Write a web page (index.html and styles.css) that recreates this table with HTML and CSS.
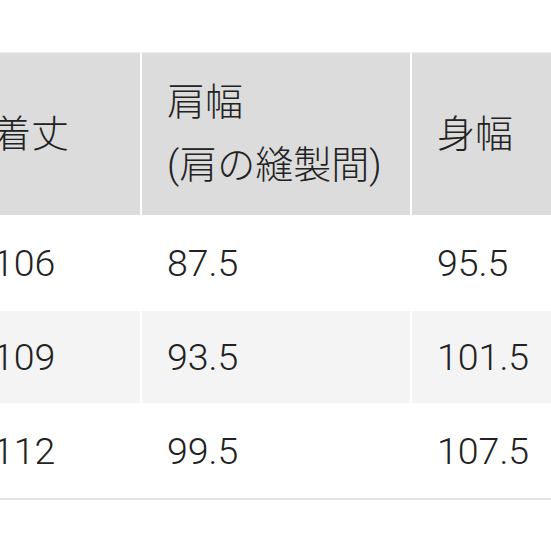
FILE: index.html
```html
<!DOCTYPE html>
<html lang="ja">
<head>
<meta charset="utf-8">
<link rel="stylesheet" href="styles.css">
</head>
<body>
<div class="frame">
<table class="size-table">
  <colgroup>
    <col class="c1"><col class="c2"><col class="c3">
  </colgroup>
  <thead>
    <tr class="head">
      <th>着丈</th>
      <th>肩幅<br>(肩の縫製間)</th>
      <th>身幅</th>
    </tr>
  </thead>
  <tbody>
    <tr class="r1"><td>106</td><td>87.5</td><td>95.5</td></tr>
    <tr class="r2 alt"><td>109</td><td>93.5</td><td>101.5</td></tr>
    <tr class="r3"><td>112</td><td>99.5</td><td>107.5</td></tr>
  </tbody>
</table>
</div>
</body>
</html>
```
FILE: styles.css
```css
html, body {
  margin: 0;
  padding: 0;
  background: #fff;
  overflow: hidden;
}
.frame {
  width: 551px;
  height: 551px;
  overflow: hidden;
  padding-top: 52px;
  box-sizing: border-box;
}
.size-table {
  margin-left: -32px;
  width: 720px;
  border-collapse: separate;
  border-spacing: 0;
  table-layout: fixed;
  font-family: Roboto, "Noto Sans CJK JP", sans-serif;
  color: #222;
  border-top: 1px solid #efefef;
  border-bottom: 2px solid #e4e4e4;
}
.c1 { width: 174px; }
.c2 { width: 270px; }
.c3 { width: 276px; }
th, td {
  text-align: left;
  padding: 0 0 0 25px;
  border-right: 2px solid #fff;
  vertical-align: middle;
}
th {
  font-weight: 300;
  font-size: 38px;
  line-height: 63px;
  background: #dcdcdc;
  height: 162px;
  box-sizing: border-box;
}
td {
  font-size: 37.5px;
  font-weight: 300;
}
.r1 td { height: 96px; }
.r2 td { height: 92px; }
.r3 td { height: 95px; }
.alt td { background: #f4f4f4; }
```
